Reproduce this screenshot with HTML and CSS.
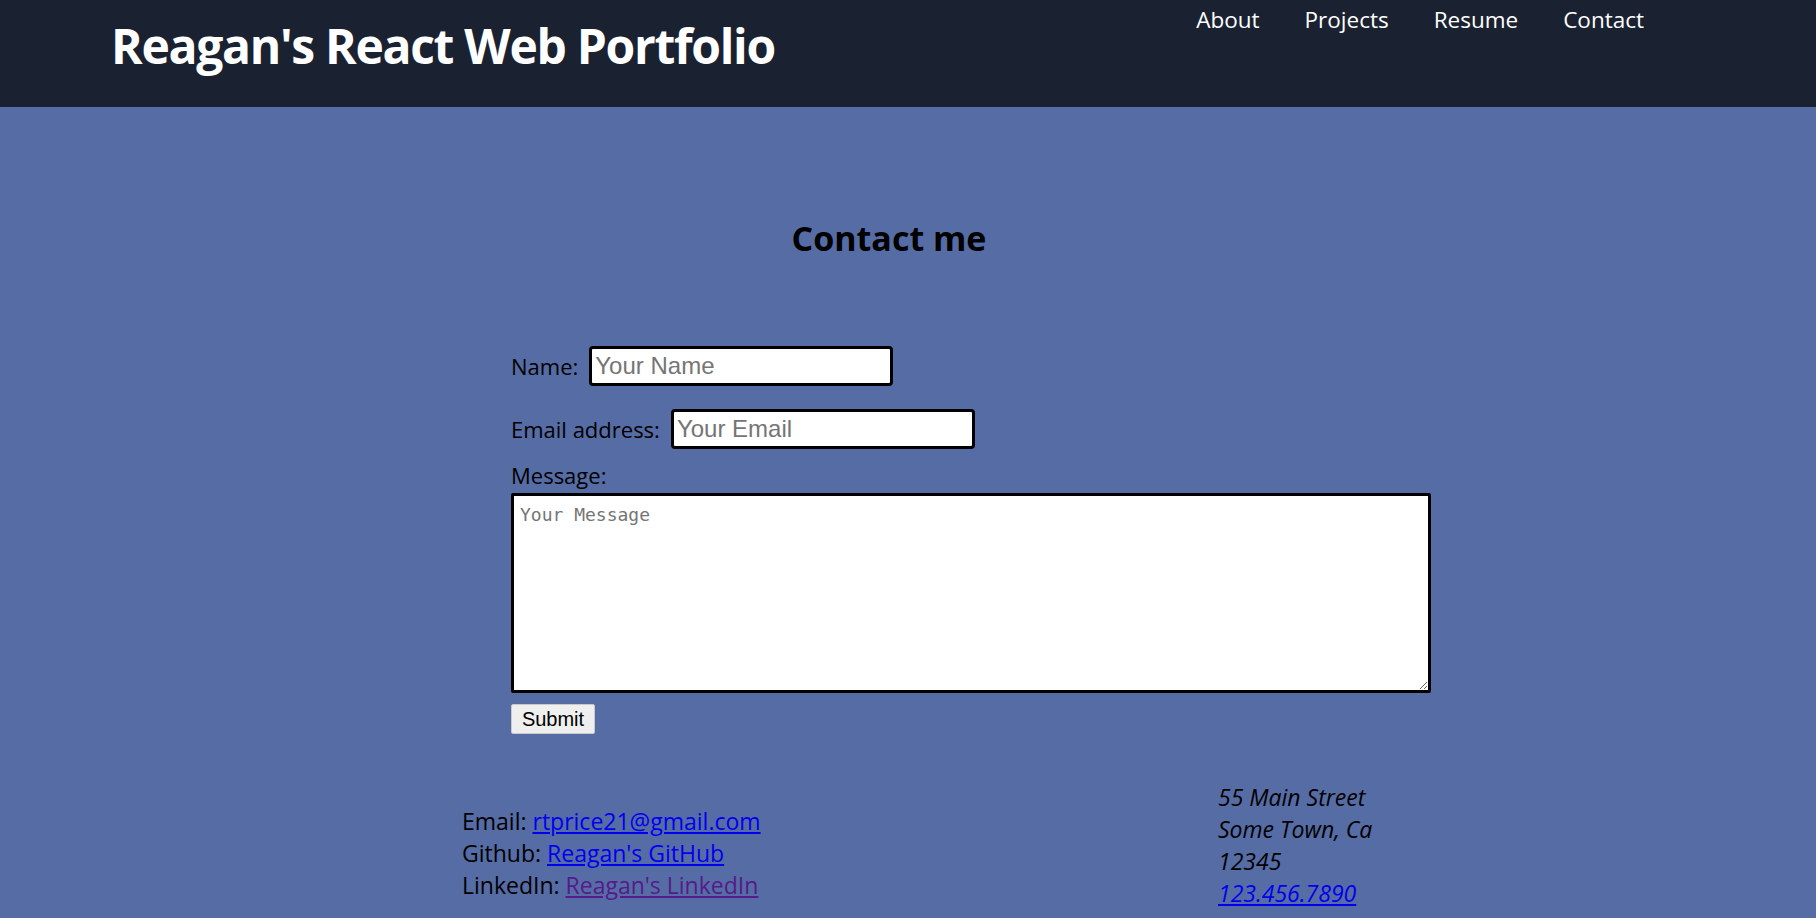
FILE: index.html
```html
<!DOCTYPE html>
<html lang="en">
<head>
<meta charset="utf-8">
<title>Reagan's React Web Portfolio</title>
<link rel="stylesheet" href="styles.css">
</head>
<body>
<header class="site-header">
  <h1 class="site-title">Reagan's React Web Portfolio</h1>
  <nav class="site-nav">
    <a href="#about">About</a>
    <a href="#projects">Projects</a>
    <a href="#resume">Resume</a>
    <a href="#contact">Contact</a>
  </nav>
</header>
<main class="contact">
  <h2 class="contact-title">Contact me</h2>
  <form class="contact-form">
    <div class="row">
      <label for="name">Name:</label>
      <input id="name" class="field" type="text" placeholder="Your Name">
    </div>
    <div class="row">
      <label for="email">Email address:</label>
      <input id="email" class="field" type="email" placeholder="Your Email">
    </div>
    <label class="msg-label" for="message">Message:</label>
    <textarea id="message" class="message" placeholder="Your Message"></textarea>
    <button type="button" class="submit">Submit</button>
  </form>
</main>
<footer class="site-footer">
  <div class="links">
    <div>Email: <a class="link" href="#mail">rtprice21@gmail.com</a></div>
    <div>Github: <a class="link" href="#gh">Reagan's GitHub</a></div>
    <div>LinkedIn: <a class="link visited" href="#li">Reagan's LinkedIn</a></div>
  </div>
  <address class="address">
    <div>55 Main Street</div>
    <div>Some Town, Ca</div>
    <div>12345</div>
    <div><a class="link" href="#tel">123.456.7890</a></div>
  </address>
</footer>
</body>
</html>
```
FILE: styles.css
```css
* { box-sizing: border-box; }
html, body { margin: 0; padding: 0; }
body {
  background: #566ca5;
  font-family: "Open Sans", "Noto Sans", sans-serif;
  color: #000;
  min-height: 918px;
}
.site-header {
  background: #1a2232;
  height: 107px;
  display: flex;
  justify-content: space-between;
  align-items: flex-start;
  padding: 0 172px 0 111px;
}
.site-title {
  margin: 0;
  padding-top: 17px;
  font-size: 48px;
  line-height: 57px;
  font-weight: 700;
  letter-spacing: -1.3px;
  color: #fff;
}
.site-nav {
  display: flex;
  gap: 45px;
  padding-top: 7px;
}
.site-nav a {
  color: #fff;
  text-decoration: none;
  font-size: 22.5px;
  line-height: 26px;
}
.contact {
  padding-left: 462px;
  width: 1316px;
}
.contact-title {
  margin: 111px 0 0;
  text-align: center;
  font-size: 34px;
  line-height: 40px;
  font-weight: 700;
}
.contact-form {
  margin-top: 88px;
  padding-left: 49px;
}
.row {
  display: flex;
  align-items: center;
  gap: 11px;
  margin-bottom: 23px;
  font-size: 22px;
}
.row label { line-height: 26px; }
.field {
  width: 304px;
  height: 40px;
  border: 3px solid #000;
  border-radius: 4px;
  padding: 2px 3px;
  font-family: "Liberation Sans", Arial, sans-serif;
  font-size: 24px;
  background: #fff;
}
.field::placeholder, .message::placeholder { color: #757575; }
.msg-label {
  display: block;
  font-size: 22px;
  line-height: 26px;
  margin-top: -10px;
}
.message {
  display: block;
  margin-top: 5px;
  width: 920px;
  height: 200px;
  border: 3px solid #000;
  border-radius: 2px;
  padding: 8px 6px;
  font-family: "DejaVu Sans Mono", "Liberation Mono", monospace;
  font-size: 18px;
  line-height: 21px;
  background: #fff;
}
.submit {
  display: block;
  margin-top: 11px;
  width: 84px;
  height: 30px;
  padding: 0 6px;
  font-family: "Liberation Sans", Arial, sans-serif;
  font-size: 20px;
  background: #efefef;
  border: 1px solid #c9c9c9;
  border-radius: 2px;
  color: #000;
}
.site-footer {
  margin-top: 47px;
  padding-left: 462px;
  display: grid;
  grid-template-columns: 756px auto;
  font-size: 23px;
  line-height: 32px;
}
.links { padding-top: 24px; }
.address { font-style: italic; }
.link { color: #0000ee; }
.link.visited { color: #551a8b; }
```
